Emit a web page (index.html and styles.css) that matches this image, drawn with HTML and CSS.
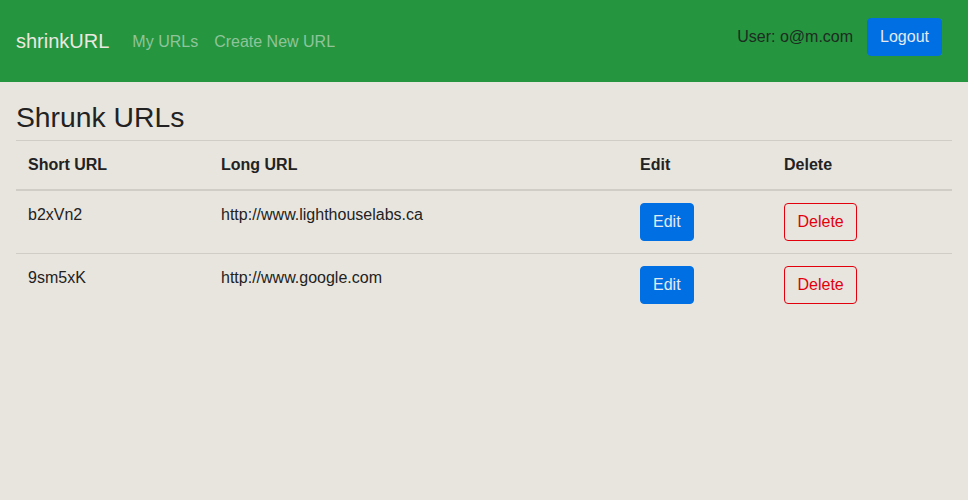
FILE: index.html
```html
<!DOCTYPE html>
<html lang="en">
<head>
<meta charset="utf-8">
<title>shrinkURL</title>
<link rel="stylesheet" href="styles.css">
</head>
<body>
<nav class="navbar">
  <a class="brand" href="#">shrinkURL</a>
  <ul class="nav-links">
    <li><a href="#">My URLs</a></li>
    <li><a href="#">Create New URL</a></li>
  </ul>
  <div class="nav-user">
    <span class="user-label">User: o@m.com</span>
    <button class="btn btn-primary">Logout</button>
  </div>
</nav>
<main class="content">
  <h3 class="title">Shrunk URLs</h3>
  <table class="table">
    <thead>
      <tr>
        <th class="c-short">Short URL</th>
        <th class="c-long">Long URL</th>
        <th class="c-edit">Edit</th>
        <th class="c-del">Delete</th>
      </tr>
    </thead>
    <tbody>
      <tr>
        <td>b2xVn2</td>
        <td>http://www.lighthouselabs.ca</td>
        <td><button class="btn btn-primary">Edit</button></td>
        <td><button class="btn btn-outline-danger">Delete</button></td>
      </tr>
      <tr>
        <td>9sm5xK</td>
        <td>http://www.google.com</td>
        <td><button class="btn btn-primary">Edit</button></td>
        <td><button class="btn btn-outline-danger">Delete</button></td>
      </tr>
    </tbody>
  </table>
</main>
</body>
</html>
```

FILE: styles.css
```css
* { box-sizing: border-box; }
html, body {
  margin: 0;
  padding: 0;
  background: #e8e5df;
  color: #222222;
  font-family: "Liberation Sans", Arial, sans-serif;
  font-size: 16px;
  line-height: 1.5;
}
.navbar {
  height: 82px;
  background: #25953f;
  display: flex;
  align-items: center;
  padding: 0 26px 0 16px;
}
.brand {
  color: #ebe8e0;
  font-size: 20px;
  line-height: 30px;
  text-decoration: none;
  margin-right: 15px;
}
.nav-links {
  list-style: none;
  display: flex;
  margin: 0;
  padding: 0;
  padding-top: 2px;
}
.nav-links a {
  display: block;
  padding: 8px;
  color: #8fc49b;
  text-decoration: none;
}
.nav-user {
  margin-left: auto;
  display: flex;
  align-items: center;
  gap: 14px;
  margin-bottom: 8px;
}
.user-label {
  color: #1e2b21;
}
.btn {
  font-family: inherit;
  font-size: 16px;
  line-height: 24px;
  padding: 6px 12px;
  border: 1px solid transparent;
  border-radius: 4px;
  cursor: pointer;
}
.btn-primary {
  background: #006fe4;
  border-color: #006fe4;
  color: #e4eaf0;
}
.btn-outline-danger {
  background: transparent;
  border-color: #e2000d;
  color: #e2000d;
  padding: 6px 12.5px;
}
.content {
  padding: 18px 16px 0;
}
.title {
  font-size: 28.3px;
  font-weight: 500;
  line-height: 34px;
  margin: 0 0 6px;
  color: #222222;
}
.table {
  width: 100%;
  border-collapse: collapse;
}
.table th, .table td {
  padding: 12px;
  text-align: left;
  vertical-align: top;
  border-top: 1px solid #d0cdc7;
}
.table th {
  font-weight: 700;
  border-bottom: 2px solid #d0cdc7;
}
.c-short { width: 193px; }
.c-long { width: 419px; }
.c-edit { width: 144px; }
```
